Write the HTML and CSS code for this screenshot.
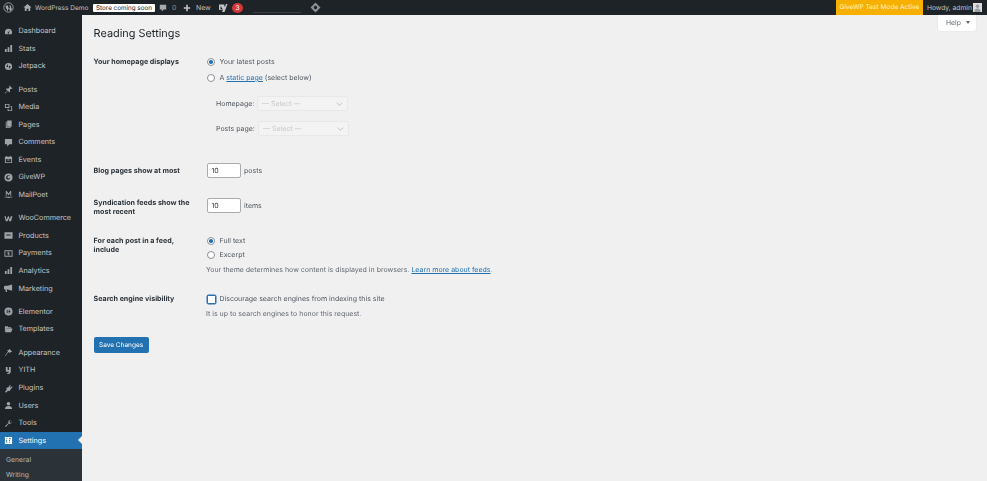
FILE: index.html
```html
<!DOCTYPE html>
<html lang="en">
<head>
<meta charset="utf-8">
<title>Reading Settings</title>
<link rel="stylesheet" href="styles.css">
</head>
<body>
<div class="page">
<header class="topbar">
  <div class="bar-left">
    <svg class="wp" viewBox="0 0 20 20"><circle cx="10" cy="10" r="8.5" fill="none" stroke="currentColor" stroke-width="1.6"/><path d="M5 6.5h4.5l-.6.8 2.3 6.7 1.4-4-1-2.7-.8-.8h4l-.8.8 2.3 6.3-3.200 3.400-2.500-7-2.400 7L4.500 8z" fill="currentColor"/></svg>
    <svg class="home" viewBox="0 0 20 20"><path d="M10 2 1 10h3v8h4v-5h4v5h4v-8h3z" fill="currentColor"/></svg>
    <span class="site">WordPress Demo</span>
    <span class="pill">Store coming soon</span>
    <svg class="cmt" viewBox="0 0 20 20"><path d="M2 2h16v12h-6l-5 5v-5H2z" fill="currentColor"/></svg>
    <span class="zero">0</span>
    <svg class="plus" viewBox="0 0 20 20"><path d="M8 2h4v6h6v4h-6v6H8v-6H2V8h6z" fill="currentColor"/></svg>
    <span class="new">New</span>
    <svg class="yoast" viewBox="0 0 20 20"><path d="M2 3h11v2h-1l2 3 2-6h3l-6 16H8l2-5-5-7v7h7v1H2z" fill="currentColor"/></svg>
    <span class="badge">3</span>
    <span class="faint"></span>
    <svg class="diamond" viewBox="0 0 20 20"><path d="M10 1 19 10 10 19 1 10z" fill="currentColor"/><circle cx="10" cy="10" r="3" fill="#1d2327"/></svg>
  </div>
  <div class="bar-right">
    <span class="testmode">GiveWP Test Mode Active</span>
    <span class="howdy">Howdy, admin</span>
    <span class="avatar"><svg viewBox="0 0 10 10"><circle cx="5" cy="3.600" r="2" fill="#9a9ea2"/><path d="M1.500 10c0-3 1.500-4 3.500-4s3.500 1 3.500 4z" fill="#9a9ea2"/></svg></span>
  </div>
</header>
<div class="shell">
<nav class="side">
  <ul class="menu">
    <li><svg viewBox="0 0 20 20"><path d="M10 4a8 8 0 0 0-8 8c0 1.500.4 2.800 1 4h14c.6-1.200 1-2.500 1-4a8 8 0 0 0-8-8zm1 9a1.500 1.500 0 1 1-2-1l4-5z" fill="currentColor"/></svg>Dashboard</li>
    <li><svg viewBox="0 0 20 20"><path d="M2 11h4v7H2zM8 7h4v11H8zM14 2h4v16h-4z" fill="currentColor"/></svg>Stats</li>
    <li><svg viewBox="0 0 20 20"><path d="M10 2a8 8 0 1 0 0 16 8 8 0 0 0 0-16zM9 11H5l4-7zm2-2V16l4-7z" fill="currentColor" fill-rule="evenodd"/></svg>Jetpack</li>
    <li class="gap"><svg viewBox="0 0 20 20"><path d="m12 1 7 7-2 1-1-1-3 3 .5 4-1.500 1.500-3.500-3.500L3 19l-1-1 5.500-5.500L4 9l1.500-1.500 4 .5 3-3-1-1z" fill="currentColor"/></svg>Posts</li>
    <li><svg viewBox="0 0 20 20"><path d="M2 2h10v9H2zM4 4v5h6V4zM14 7h4v11H8v-5h2v3h6V9h-2z" fill="currentColor" fill-rule="evenodd"/></svg>Media</li>
    <li><svg viewBox="0 0 20 20"><path d="M7 1h10v14H7zM4 4h2v12h9v2H4z" fill="currentColor"/></svg>Pages</li>
    <li><svg viewBox="0 0 20 20"><path d="M2 2h16v12h-6l-5 5v-5H2z" fill="currentColor"/></svg>Comments</li>
    <li><svg viewBox="0 0 20 20"><path d="M2 4h3V2h2v2h6V2h2v2h3v14H2zm2 5v7h12V9zm2 1h2v2H6zm3 0h2v2H9zm3 0h2v2h-2z" fill="currentColor" fill-rule="evenodd"/></svg>Events</li>
    <li><svg viewBox="0 0 20 20"><path d="M10 1a9 9 0 1 0 0 18 9 9 0 0 0 0-18zm0 4c2 0 3.500 1 4 2-2-1-5-1-6 1s0 4 2 4c1.500 0 2.500-.5 4-2-.5 3-2.500 5-5 5a5 5 0 0 1 1-10z" fill="currentColor" fill-rule="evenodd"/></svg>GiveWP</li>
    <li><svg viewBox="0 0 20 20"><path d="M4 2h2l4 6 4-6h2v11h-2V6l-4 6-4-6v7H4zM1 15h18v1c-3 0-6 .5-9 2-3-1.500-6-2-9-2z" fill="currentColor"/></svg>MailPoet</li>
    <li class="gap"><svg viewBox="0 0 20 20"><path d="M1 5h3l1.500 8L9 5h2l2 8 2-8h4l-3.500 11h-4L10 10l-2 6H4z" fill="currentColor"/></svg>WooCommerce</li>
    <li><svg viewBox="0 0 20 20"><path d="M1 3h18v14H1zM5 8v2h10V8z" fill="currentColor" fill-rule="evenodd"/></svg>Products</li>
    <li><svg viewBox="0 0 20 20"><path d="M1 3h18v14H1zM3 5v10h14V5zM8 6h4v2H9.500v1H12v5H8v-2h2.500v-1H8z" fill="currentColor" fill-rule="evenodd"/></svg>Payments</li>
    <li><svg viewBox="0 0 20 20"><path d="M2 11h4v7H2zM8 7h4v11H8zM14 2h4v16h-4z" fill="currentColor"/></svg>Analytics</li>
    <li><svg viewBox="0 0 20 20"><path d="M18 1v14L8 12H6l1 6H4l-1-6a4 4 0 0 1 0-8h5z" fill="currentColor"/></svg>Marketing</li>
    <li class="gap"><svg viewBox="0 0 20 20"><path d="M10 1a9 9 0 1 0 0 18 9 9 0 0 0 0-18zM6 6h2v8H6zm4 0h4v2h-4zm0 3h4v2h-4zm0 3h4v2h-4z" fill="currentColor" fill-rule="evenodd"/></svg>Elementor</li>
    <li><svg viewBox="0 0 20 20"><path d="M2 3h6l2 2h6v2H5l-3 8zM5 8h14l-3 8H2z" fill="currentColor"/></svg>Templates</li>
    <li class="gap"><svg viewBox="0 0 20 20"><path d="M12 2 18 8l-3 2-1-1-2 2-2-2-7 9-1-1 7-9-2-2 2-2 1 1z" fill="currentColor"/></svg>Appearance</li>
    <li><svg viewBox="0 0 20 20"><path d="M4 2h4v7h3V2h4v10c0 4-3 6-8 6v-2c2 0 4-1 4-3H7c-2 0-3-1-3-3z" fill="currentColor"/></svg>YITH</li>
    <li><svg viewBox="0 0 20 20"><path d="m13 2 2 1-2 4 2 1 3-3 1 2-4 4-1 3c-1 2-3 2-5 1l-4 4-3-1 4-5c-1-2-1-4 1-5l3-1z" fill="currentColor"/></svg>Plugins</li>
    <li><svg viewBox="0 0 20 20"><circle cx="10" cy="6" r="4" fill="currentColor"/><path d="M2 18c0-5 3-7 8-7s8 2 8 7z" fill="currentColor"/></svg>Users</li>
    <li><svg viewBox="0 0 20 20"><path d="M18 5a5 5 0 0 1-7 5l-7 8-2-2 8-7a5 5 0 0 1 5-7l-3 3 1 3 3 1z" fill="currentColor"/></svg>Tools</li>
    <li class="current"><svg viewBox="0 0 20 20"><path d="M2 2h16v16H2zM5 5v2h2V5zm0 4v6h2V9zm6 0v2h2V9zm0 4v2h2v-2zm0-8v2h4V5z" fill="currentColor" fill-rule="evenodd"/></svg>Settings</li>
  </ul>
  <ul class="submenu">
    <li>General</li>
    <li>Writing</li>
  </ul>
</nav>
<main class="main">
  <div class="help">Help <i class="caret"></i></div>
  <h1>Reading Settings</h1>
  <section class="row row-home">
    <div class="label">Your homepage displays</div>
    <div class="field">
      <div class="opt"><span class="radio on"></span>Your latest posts</div>
      <div class="opt opt-2"><span class="radio"></span>A&nbsp;<a>static page</a>&nbsp;(select below)</div>
      <div class="pick pick-1"><span class="pick-label">Homepage:</span><span class="select">— Select —<svg viewBox="0 0 10 6"><path d="m1 1 4 4 4-4" fill="none" stroke="#a7aaad" stroke-width="1"/></svg></span></div>
      <div class="pick pick-2"><span class="pick-label">Posts page:</span><span class="select">— Select —<svg viewBox="0 0 10 6"><path d="m1 1 4 4 4-4" fill="none" stroke="#a7aaad" stroke-width="1"/></svg></span></div>
    </div>
  </section>
  <section class="row row-blog">
    <div class="label">Blog pages show at most</div>
    <div class="field inline"><span class="num">10</span>posts</div>
  </section>
  <section class="row row-synd">
    <div class="label">Syndication feeds show the most recent</div>
    <div class="field inline"><span class="num">10</span>items</div>
  </section>
  <section class="row row-feed">
    <div class="label">For each post in a feed, include</div>
    <div class="field">
      <div class="opt"><span class="radio on"></span>Full text</div>
      <div class="opt opt-3"><span class="radio"></span>Excerpt</div>
      <p class="desc desc-1">Your theme determines how content is displayed in browsers. <a>Learn more about feeds</a>.</p>
    </div>
  </section>
  <section class="row row-search">
    <div class="label">Search engine visibility</div>
    <div class="field">
      <div class="opt"><span class="check"></span>Discourage search engines from indexing this site</div>
      <p class="desc desc-2">It is up to search engines to honor this request.</p>
    </div>
  </section>
  <div class="save">Save Changes</div>
</main>
</div>
</div>
</body>
</html>
```
FILE: styles.css
```css
* { box-sizing: border-box; }
html, body { margin: 0; height: 100%; }
body { background: #f0f0f1; overflow: hidden; }
.page {
  width: 987px; height: 481px; overflow: hidden;
  font-family: Inter, "Liberation Sans", sans-serif;
  font-size: 7px; line-height: 10px; color: #50575e;
  text-rendering: geometricPrecision;
  filter: blur(.6px);
}
.topbar {
  height: 15px; background: #1d2327; color: #c3c4c7;
  display: flex; justify-content: space-between; align-items: center;
}
.bar-left { display: flex; align-items: center; }
.bar-right { display: flex; align-items: center; height: 100%; }
.topbar svg { display: block; flex: none; }
.wp { width: 11px; height: 11px; margin-left: 3px; color: #a7aaad; }
.home { width: 9px; height: 9px; margin-left: 9px; color: #a7aaad; }
.site { margin-left: 3px; width: 55px; white-space: nowrap; font-size: 6.5px; }
.pill {
  margin-left: 3px; width: 62px; height: 8px; line-height: 8px;
  background: #fff; color: #1d2327; border-radius: 1px;
  font-size: 6.3px; text-align: center; white-space: nowrap;
}
.cmt { width: 8px; height: 8px; margin-left: 4px; color: #a7aaad; }
.zero { margin-left: 5px; width: 12px; color: #8c8f94; font-size: 6.9px; }
.plus { width: 8px; height: 8px; margin-left: -1px; color: #c3c4c7; }
.new { margin-left: 5px; width: 14px; font-size: 6.9px; }
.yoast { width: 10px; height: 10px; margin-left: 8px; color: #c3c4c7; }
.badge {
  margin-left: 4px; width: 11px; height: 10px; line-height: 10px; border-radius: 50%;
  background: #d63638; color: #fff; text-align: center; font-size: 6.5px;
}
.faint { width: 48px; height: 1px; margin: 9px 0 0 10px; background: #3a4046; }
.diamond { width: 11px; height: 11px; margin-left: 9px; color: #8c8f94; }
.testmode {
  width: 87px; height: 100%; background: #f8b000; color: #fff3c4;
  text-align: center; line-height: 15px; font-size: 6.55px; white-space: nowrap;
}
.howdy { margin-left: 4px; width: 43px; font-size: 6.7px; white-space: nowrap; }
.avatar { width: 9px; height: 9px; margin: 0 5px 0 3px; background: #dcdcde; display: block; }
.avatar svg { width: 9px; height: 9px; }

.shell { display: flex; height: 466px; }
.side { width: 82px; flex: none; background: #1d2327; color: #c3c4c7; padding-top: 7.3px; }
.menu, .submenu { list-style: none; margin: 0; padding: 0; }
.menu li {
  height: 17.55px; display: flex; align-items: center; position: relative;
  font-size: 7.2px; white-space: nowrap;
}
.menu svg { width: 9px; height: 9px; margin: 0 5.5px 0 4px; flex: none; color: #9ea3a8; }
.menu .gap { margin-top: 5.9px; }
.menu .current { background: #2271b1; color: #fff; margin-top: 0; }
.menu .current svg { color: #fff; }
.menu .current::after {
  content: ""; position: absolute; right: 0; top: 4.500px;
  border: 4px solid transparent; border-right-color: #f0f0f1; border-left: 0;
}
.submenu { background: #2c3338; color: #b4b9be; padding-top: 2.5px; height: 40px; font-size: 6.8px; }
.submenu li { height: 15px; line-height: 15px; padding-left: 6px; }

.main { flex: 1; padding-left: 11.6px; position: relative; min-width: 0; }
.help {
  position: absolute; right: 11px; top: 0; width: 38px; height: 16px;
  background: #fff; border-radius: 0 0 2px 2px; box-shadow: 0 0 1px #c3c4c7;
  color: #646970; font-size: 6.8px; line-height: 15px; padding-left: 8px;
}
.caret {
  display: inline-block; margin-left: 3px; vertical-align: 1px;
  border: 2.500px solid transparent; border-top: 3px solid #646970; border-bottom: 0;
}
h1 { margin: 0; padding-top: 11px; height: 42px; font-size: 10.9px; line-height: 14px; font-weight: 400; color: #1d2327; }
.row { display: flex; }
.label { width: 112.4px; padding-right: 10px; font-weight: 700; color: #2c3338; line-height: 9px; font-size: 7.1px; }
.field { flex: 1; min-width: 0; }
.opt { display: flex; align-items: center; height: 10px; white-space: nowrap; }
.opt-2 { margin-top: 6px; }
.opt-3 { margin-top: 4px; }
.radio {
  width: 8px; height: 8px; border-radius: 50%; background: #fff; border: 1px solid #8c8f94;
  margin: 0 4.5px 0 1px; flex: none; position: relative;
}
.radio.on::after {
  content: ""; position: absolute; left: 1.250px; top: 1.250px;
  width: 3.500px; height: 3.500px; border-radius: 50%; background: #2271b1;
}
.check {
  width: 9px; height: 9px; border: 1px solid #2271b1; border-radius: 1.500px; background: #fff;
  box-shadow: 0 0 0 .5px #2271b1; margin: 0 3.5px 0 1px; flex: none;
}
a { color: #2271b1; text-decoration: underline; }
.pick { display: flex; align-items: center; padding-left: 10px; white-space: nowrap; }
.pick-1 { margin-top: 13px; }
.pick-2 { margin-top: 10px; }
.pick-label { width: 41px; }
.pick-2 .pick-label { width: 42px; }
.select {
  width: 91px; height: 15px; line-height: 15px; padding: 0 4px;
  background: #f3f3f4; border: 1px solid #e8e8e9; border-radius: 2px; color: #c6c8ca;
  display: flex; justify-content: space-between; align-items: center;
}
.select svg { width: 7px; height: 4px; }
.inline { display: flex; align-items: center; height: 15px; }
.num {
  width: 34px; height: 15px; line-height: 13px; margin: 0 3px 0 1px; padding-left: 3.500px;
  background: #fff; border: 1px solid #a9acaf; border-radius: 2px; color: #2c3338;
}
.desc { margin: 0; color: #646970; white-space: nowrap; }
.desc-1 { margin-top: 5px; }
.desc-2 { margin-top: 5px; }
.row-home { height: 106px; }
.row-blog { height: 35px; }
.row-blog .label { padding-top: 3px; }
.row-synd { height: 38px; }
.row-feed { height: 58px; }
.row-search { height: 43px; }
.save {
  width: 55px; height: 16px; background: #2271b1; color: #fff; border-radius: 2px;
  text-align: center; line-height: 16px; font-size: 6.5px;
}
```
